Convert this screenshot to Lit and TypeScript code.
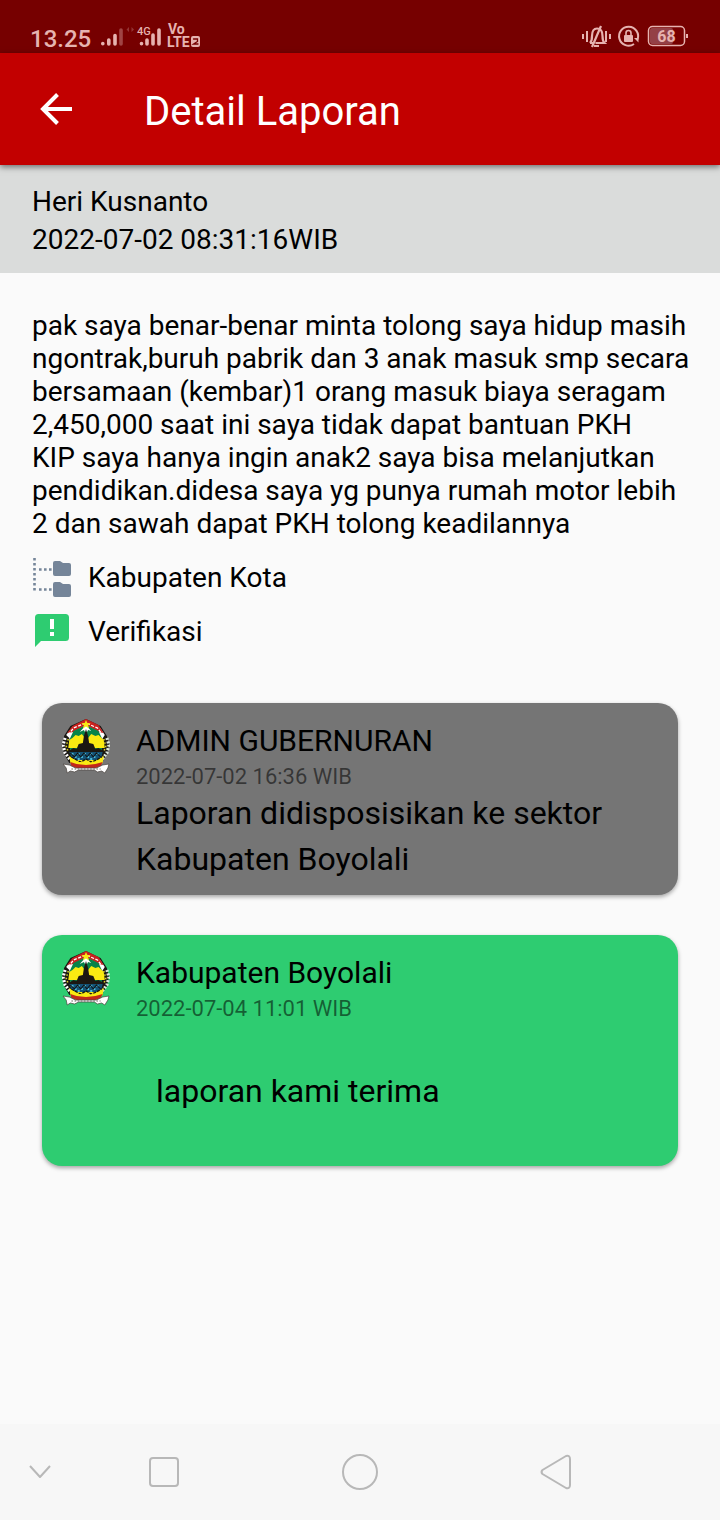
import { LitElement, html, css, svg } from "lit";
import { customElement, property } from "lit/decorators.js";

@customElement("status-bar")
class StatusBar extends LitElement {
  static styles = css`
    :host { display: block; background: #760000; color: #e6b3b0; }
    .bar { display: flex; justify-content: space-between; align-items: flex-end; height: 53px; padding: 0 32px 0 30px; box-sizing: border-box; }
    .side { display: flex; align-items: center; height: 32px; }
    .time { font-size: 24px; font-weight: 500; line-height: 32px; width: 70px; padding-top: 3px; }
    svg { display: block; }
    text { font-family: Roboto, sans-serif; font-weight: 700; fill: #e6b3b0; }
    .network { font-weight: 500; }
  `;
  render() {
    return html`
      <div class="bar">
        <div class="side">
          <span class="time">13.25</span>
          <svg width="104" height="32" viewBox="100 21 104 32" fill="none" stroke="#e6b3b0" stroke-width="3.6" stroke-linecap="round">
            <path d="M102.8 43.6v.2M108.8 40v4M115 35.600v8.400" />
            <path d="M121 30v14" stroke="#a04444" />
            <path d="M129 27l-2.500 2.500L129 32zM131.500 27l2.500 2.500-2.500 2.500z" fill="#943434" stroke="none" />
            <path d="M141.500 43.600v.2M147 40v4M153 35v9M159 30v14" />
            <text class="network" x="137" y="35" font-size="11" stroke="none">4G</text>
            <text font-size="14" stroke="none"><tspan x="168" y="34">Vo</tspan><tspan x="167" y="47">LTE</tspan></text>
            <rect x="191" y="36" width="9" height="11" rx="2" fill="#e6b3b0" stroke="none" />
            <path d="M193.500 39h4v2.500l-4 2.500h4.500" stroke="#760000" stroke-width="1.300" />
          </svg>
        </div>
        <div class="side">
          <svg width="108" height="32" viewBox="580 21 108 32" fill="none" stroke="#e6b3b0" stroke-width="2">
            <path d="M583 34v5M587 31v11M606 31v11M610 34v5" />
            <path d="M590 43h3.500M590 43c2-2 2-4 2-7 0-5 2-7.500 5-7.500 4 0 5.500 3 5.500 7.500 0 3 0 5 2 7h-9M592 47l9-21" stroke-width="2.200" />
            <path d="M594 46h5" />
            <path d="M634 44a9.500 9.500 0 1 1 3.500-4.500" />
            <path d="M634 38h4.500v4.500z" fill="#e6b3b0" stroke="none" />
            <rect x="624" y="35" width="9" height="7" rx="1" fill="#e6b3b0" stroke="none" />
            <path d="M626 35v-2a2.500 2.500 0 0 1 5 0v2" stroke-width="1.600" />
            <rect x="648.500" y="26.500" width="36" height="19" rx="4" stroke-width="1.500" />
            <rect x="650" y="28" width="23" height="16" rx="2" fill="#944046" stroke="none" />
            <path d="M687 34v4" />
            <text x="666.500" y="42" font-size="16" text-anchor="middle" stroke="none">68</text>
          </svg>
        </div>
      </div>
    `;
  }
}

@customElement("province-crest")
class ProvinceCrest extends LitElement {
  static styles = css`
    :host { display: block; }
    svg { display: block; }
  `;
  render() {
    return html`
      <svg width="48" height="56" viewBox="1 0 46 56" preserveAspectRatio="none" role="img" aria-label="Jawa Tengah">
        <path d="M24 1L9 8 3 18 1 27l2 9 5 9h31l5-9 2-9-2-9-6-10z" fill="#1a1714" />
        <path d="M8 20L5 17l6-8L24 2l13 7 5 8-3 5-1 14H9z" fill="#fff" />
        <path d="M6 15l5-7L24 1l12 6 5 8-5-1-12-7-12 7z" fill="#c8211f" />
        <path d="M7 17L12 10l12-5 11 5 5 7" fill="none" stroke="#fff" stroke-width="1.300" stroke-dasharray="3 1.500" />
        <path d="M8 22l4-9 12-6 12 6 4 9-1 12H9z" fill="#078348" />
        <path d="M24 7l5 6-3-1-2 4-2-4-4 2z" fill="#fff" />
        <path d="M7 30l1-8 3-2 3-3 3 1 3-2 3 4 1-6 2 6 3-4 4 2 3-1 3 3 2 2 1 8z" fill="#faea12" />
        <path d="M6 34l6-4 3 1 2-5 4-1 1-7 2-7 2 7 1 7 4 1 2 5 3-1 6 4-4 4H10z" fill="#1c1812" />
        <path d="M8 34h32l-2 8H11z" fill="#145376" />
        <path d="M10 36h2M16 36h2M22 36h2M28 36h2M34 36h2M13 39h2M19 39h2M25 39h2M31 39h2M16 41h2M28 41h2" stroke="#4dbad8" stroke-width="2" />
        <path d="M9 35l4 4 3-4 3 4 3-4 3 4 3-4 3 4 3-4 4 4" fill="none" stroke="#111" />
        <path d="M4 20l-2 7 2 8 5 7" fill="none" stroke="#fff" stroke-width="3" stroke-dasharray="2 1.500" />
        <path d="M44 20l2 7-2 8-5 7" fill="none" stroke="#dde9dd" stroke-width="3" stroke-dasharray="2 1.500" />
        <path d="M7 21l-2 7 2 6M41 21l2 7-2 6" fill="none" stroke="#d9cf2a" stroke-width="1.500" stroke-dasharray="1.500 2" />
        <path d="M8 38l6 4h20l7-4-1 7-7 5H15l-6-5z" fill="#faea12" />
        <path d="M10 39l5 3 4 2 5-3 5 3 5-2 5-3" fill="none" stroke="#181510" stroke-width="1.300" stroke-dasharray="3 1" />
        <path d="M9 44l6 2 9 1 9-1 7-2-2 4-5 2H15l-5-2z" fill="#c2281b" />
        <path d="M17 45h14" stroke="#faea12" stroke-width="2" stroke-dasharray="3 1" />
        <path d="M2 46l6 1 6 3h20l6-3 6-1-1 4-3 5-3-2-4 1-3-2H17l-4 2-4-1-3 2-1-5z" fill="#fff" stroke="#4b4541" stroke-width=".7" />
        <path d="M10 51h28" stroke="#6f6965" stroke-width="1.200" stroke-dasharray="1.500 1.500" />
        <path d="M24 2l1.200 3 3.300.2-2.500 2 1 3.300-3-2-3 2 1-3.300-2.500-2 3.300-.2z" fill="#faea12" />
      </svg>
    `;
  }
}

@customElement("reply-card")
class ReplyCard extends LitElement {
  @property() sender = "";
  @property() time = "";
  @property() tone = "";
  @property() message = "";
  static styles = css`
    :host { display: block; }
    .card { display: grid; grid-template-columns: 48px 1fr; column-gap: 26px; align-items: start; padding: 15px 20px 13px; border-radius: 20px; box-shadow: 0 2px 4px rgba(0, 0, 0, 0.35); }
    .grey { background: #757575; }
    .green { background: #2ecc71; }
    h2, p { margin: 0; font-weight: 400; }
    h2 { font-size: 30px; line-height: 46px; }
    time { display: block; font-size: 22px; line-height: 26px; color: rgba(0, 0, 0, 0.54); }
    .message { font-size: 32px; line-height: 46px; }
    .green .message { padding: 46px 20px 39px; }
  `;
  render() {
    return html`
      <article class="card ${this.tone}">
        <province-crest></province-crest>
        <div>
          <h2>${this.sender}</h2>
          <time>${this.time}</time>
          <p class="message">${this.message}</p>
        </div>
      </article>
    `;
  }
}

const folder = (y: number) => svg`<path d="M${21} ${y + 2}a2 2 0 0 1 2-2h5l3 2h6a2 2 0 0 1 2 2v9a2 2 0 0 1-2 2H23a2 2 0 0 1-2-2z" fill="#758599"/>`;

@customElement("app-root")
class AppRoot extends LitElement {
  static styles = css`
    :host { display: flex; flex-direction: column; min-height: 100vh; background: #fafafa; color: #000; font-family: Roboto, sans-serif; }
    header { display: flex; align-items: center; gap: 72px; height: 112px; padding: 0 40px; background: #c20000; color: #fff; box-shadow: 0 2px 6px rgba(0, 0, 0, 0.5); z-index: 1; }
    h1 { margin: 0; font-size: 40px; line-height: 48px; font-weight: 400; padding-top: 6px; }
    button { border: 0; padding: 0; background: none; color: inherit; cursor: pointer; }
    svg { display: block; }
    .reporter { background: #dadcdb; padding: 18px 32px 14px; font-size: 28px; line-height: 38px; }
    main { flex: 1; }
    .report { padding: 36px 24px 45px 32px; font-size: 28px; line-height: 33px; }
    p { margin: 0; }
    .tags { list-style: none; margin: 0; padding: 10px 0 0; }
    .tags li { display: flex; align-items: center; gap: 16px; height: 54px; }
    .replies { display: grid; gap: 40px; padding: 0 42px 40px; }
    nav { display: flex; height: 96px; align-items: center; justify-content: space-between; padding: 0 148px 0 28px; background: #f7f7f7; }
    nav svg { fill: none; stroke: #b8b8b8; stroke-width: 2; stroke-linejoin: round; }
    .main-keys { display: flex; flex: 1; justify-content: space-between; align-items: center; padding-left: 96px; }
  `;
  render() {
    return html`
      <status-bar></status-bar>
      <header>
        <button aria-label="Kembali">
          <svg width="32" height="32" viewBox="0 0 32 32" fill="none" stroke="#fff" stroke-width="4"><path d="M32 16H4M17.500 1.500L3 16l14.500 14.500" /></svg>
        </button>
        <h1>Detail Laporan</h1>
      </header>
      <section class="reporter">
        <div>Heri Kusnanto</div>
        <div>2022-07-02 08:31:16WIB</div>
      </section>
      <main>
        <section class="report">
          <p>pak saya benar-benar minta tolong saya hidup masih ngontrak,buruh pabrik dan 3 anak masuk smp secara bersamaan (kembar)1 orang masuk biaya seragam 2,450,000 saat ini saya tidak dapat bantuan PKH<br />KIP saya hanya ingin anak2 saya bisa melanjutkan pendidikan.didesa saya yg punya rumah motor lebih<br />2 dan sawah dapat PKH tolong keadilannya</p>
          <ul class="tags">
            <li>
              <svg width="40" height="40" viewBox="0 0 40 40">
                <path d="M2.500 1v34M7 12.500h13M7 32.500h13" fill="none" stroke="#758599" stroke-width="2.600" stroke-dasharray="2.600 2.400" />
                ${folder(4)}${folder(25)}
              </svg>
              Kabupaten Kota
            </li>
            <li>
              <svg width="40" height="40" viewBox="0 0 40 40">
                <path d="M6.500 3h27a3.500 3.500 0 0 1 3.500 3.500v20a3.500 3.500 0 0 1-3.500 3.500H9l-6 6V6.500A3.500 3.500 0 0 1 6.500 3z" fill="#2ecc71" />
                <path d="M20 8v10M20 21v4" stroke="#fff" stroke-width="4" />
              </svg>
              Verifikasi
            </li>
          </ul>
        </section>
        <section class="replies">
          <reply-card tone="grey" sender="ADMIN GUBERNURAN" time="2022-07-02 16:36 WIB" message="Laporan didisposisikan ke sektor Kabupaten Boyolali"></reply-card>
          <reply-card tone="green" sender="Kabupaten Boyolali" time="2022-07-04 11:01 WIB" message="laporan kami terima"></reply-card>
        </section>
      </main>
      <nav>
        <button aria-label="Sembunyikan"><svg width="24" height="24" viewBox="0 0 24 24"><path d="M2 6l10 11L22 6" /></svg></button>
        <div class="main-keys">
          <button aria-label="Aplikasi terbaru"><svg width="32" height="32" viewBox="0 0 32 32"><rect x="2" y="2" width="28" height="28" rx="3" /></svg></button>
          <button aria-label="Beranda"><svg width="38" height="38" viewBox="0 0 38 38"><circle cx="19" cy="19" r="17" /></svg></button>
          <button aria-label="Kembali"><svg width="32" height="36" viewBox="0 0 32 36"><path d="M2.500 16L26 2q4-1 4 3v26q0 4-4 3L2.500 20q-2-2 0-4z" /></svg></button>
        </div>
      </nav>
    `;
  }
}
